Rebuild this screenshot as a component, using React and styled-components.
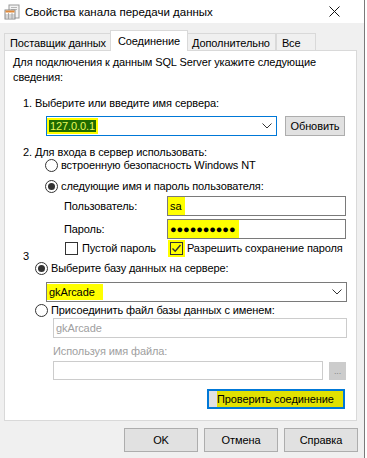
import React from "react";
import styled, { createGlobalStyle } from "styled-components";

const Global = createGlobalStyle`
  html, body { margin: 0; padding: 0; background: #fff; }
  body {
    font-family: "Liberation Sans", Arial, sans-serif;
    font-size: 11px;
    letter-spacing: -0.1px;
    color: #000;
    white-space: nowrap;
  }
`;

// окно диалога
const Window = styled.div`
  width: 364px;
  height: 458px;
  background: #f0f0f0;
  border-right: 1px solid #7a7a7a;
  display: flex;
  flex-direction: column;
`;
const TitleBar = styled.div`
  height: 23px;
  background: #fff;
  display: flex;
  align-items: center;
  padding-left: 4px;
  gap: 5px;
  font-size: 11.5px;
  letter-spacing: 0;
`;
const TitleText = styled.div`
  flex: 1;
`;
const Close = styled.div`
  width: 44px;
  display: flex;
  justify-content: center;
  padding-right: 8px;
`;

// вкладки
const Tabs = styled.div`
  display: flex;
  align-items: flex-end;
  padding-left: 4px;
  margin-top: 8px;
  height: 20px;
  position: relative;
  z-index: 1;
`;
const Tab = styled.div`
  height: ${p => (p.$active ? 21 : 18)}px;
  min-width: ${p => p.$min || 0}px;
  box-sizing: border-box;
  padding: 0 ${p => (p.$active ? 7 : 5)}px;
  margin: 0 ${p => (p.$active ? -2 : 0)}px;
  background: ${p => (p.$active ? "#fff" : "#f0f0f0")};
  border: 1px solid #d9d9d9;
  border-bottom: ${p => (p.$active ? "none" : "1px solid #d9d9d9")};
  display: flex;
  align-items: center;
  position: relative;
  z-index: ${p => (p.$active ? 2 : 0)};
  padding-top: ${p => (p.$active ? 0 : 1)}px;
`;
const Panel = styled.div`
  margin: -1px 7px 0 4px;
  height: 371px;
  box-sizing: border-box;
  background: #fff;
  border: 1px solid #d9d9d9;
  padding: 4px 0 0 8px;
  display: flex;
  flex-direction: column;
`;
const Line = styled.div`
  line-height: 15px;
  padding-left: ${p => p.$indent || 0}px;
  margin-top: ${p => p.$top || 0}px;
  color: ${p => (p.$disabled ? "#a0a0a0" : "#000")};
  height: ${p => p.$h || "auto"};
`;
const Row = styled.div`
  display: flex;
  align-items: center;
  padding-left: ${p => p.$indent || 0}px;
  margin-top: ${p => p.$top || 0}px;
  height: ${p => p.$h || 20}px;
`;
const Combo = styled.div`
  width: ${p => p.$w}px;
  height: 20px;
  box-sizing: border-box;
  border: 1px solid ${p => (p.$focus ? "#0078d7" : "#7a7a7a")};
  background: #fff;
  display: flex;
  align-items: center;
  padding-left: 2px;
`;
const ComboValue = styled.div`
  flex: 1;
  display: flex;
`;
const Arrow = styled.div`
  width: 18px;
  display: flex;
  justify-content: center;
`;
const Field = styled.div`
  width: ${p => p.$w}px;
  height: ${p => p.$h || 20}px;
  box-sizing: border-box;
  border: 1px solid ${p => (p.$disabled ? "#cccccc" : "#7a7a7a")};
  background: #fff;
  display: flex;
  align-items: center;
  padding-left: 2px;
  color: ${p => (p.$disabled ? "#a0a0a0" : "#000")};
`;
const Label = styled.div`
  width: ${p => p.$w}px;
`;
const Button = styled.div`
  width: ${p => p.$w}px;
  height: ${p => p.$h || 20}px;
  box-sizing: border-box;
  border: 1px solid ${p => (p.$disabled ? "#cccccc" : "#adadad")};
  background: ${p => (p.$disabled ? "#cccccc" : "#e1e1e1")};
  display: flex;
  align-items: center;
  justify-content: center;
  color: ${p => (p.$disabled ? "#8a8a8a" : "#000")};
  font-size: ${p => p.$fs || 11}px;
  margin-left: ${p => p.$ml || 0}px;
`;
const TestButton = styled.div`
  width: 138px;
  height: 20px;
  box-sizing: border-box;
  border: 2px solid #0078d7;
  background: linear-gradient(to right, #e1e1e1 0 8px, #e1e100 8px);
  display: flex;
  align-items: center;
  padding-left: 8px;
  margin-left: 194px;
  margin-top: 9px;
`;
const Marker = styled.span`
  background: #ffff00;
  padding: ${p => p.$pad || "1px 2px"};
  margin-left: -2px;
`;
const Selected = styled.span`
  background: #1f6b00;
  color: #e8f85a;
  padding: 0 1px;
  outline: 2px solid #ffff00;
`;
const Radio = styled.span`
  width: 13px;
  height: 13px;
  box-sizing: border-box;
  border: 1px solid #333;
  border-radius: 50%;
  background: #fff;
  display: inline-flex;
  align-items: center;
  justify-content: center;
  margin-right: 3px;
  flex: none;
  &::after {
    content: "";
    width: 7px;
    height: 7px;
    border-radius: 50%;
    background: ${p => (p.$on ? "#333" : "transparent")};
  }
`;
const Check = styled.span`
  width: 13px;
  height: 13px;
  box-sizing: border-box;
  border: 1px solid #333;
  background: ${p => (p.$mark ? "#ffff00" : "#fff")};
  display: inline-flex;
  align-items: center;
  justify-content: center;
  margin-right: 4px;
  flex: none;
  outline: ${p => (p.$mark ? "2px solid #ffff00" : "none")};
`;
const Footer = styled.div`
  display: flex;
  justify-content: flex-end;
  gap: 6px;
  padding: 7px 6px 0 0;
`;
const FooterButton = styled.div`
  width: 74px;
  height: 24px;
  box-sizing: border-box;
  border: 1px solid #adadad;
  background: #e1e1e1;
  display: flex;
  align-items: center;
  justify-content: center;
`;

const ChevronDown = () => (
  <svg width="10" height="6" viewBox="0 0 10 6">
    <path d="M0.5 0.5 L5 5 L9.5 0.5" fill="none" stroke="#333" strokeWidth="1" />
  </svg>
);

const CheckMark = () => (
  <svg width="11" height="11" viewBox="0 0 11 11">
    <path d="M1.5 5.5 L4.2 8.2 L9.5 2" fill="none" stroke="#333" strokeWidth="1.4" />
  </svg>
);

const AppIcon = () => (
  <svg width="16" height="16" viewBox="0 0 16 16">
    <rect x="5" y="1" width="10" height="13" fill="#f4f4f4" stroke="#9a9a9a" />
    <rect x="7" y="3" width="6" height="1" fill="#b8b8b8" />
    <rect x="7" y="5" width="6" height="1" fill="#b8b8b8" />
    <rect x="1" y="6" width="10" height="9" fill="#fff" stroke="#8a8a8a" />
    <rect x="1.5" y="6.5" width="9" height="2" fill="#e08a3a" />
    <path d="M1 11 H11 M1 13 H11 M4.5 9 V15 M8 9 V15" stroke="#9a9a9a" strokeWidth="0.8" />
  </svg>
);

const CloseIcon = () => (
  <svg width="11" height="11" viewBox="0 0 11 11">
    <path d="M0.5 0.5 L10.5 10.5 M10.5 0.5 L0.5 10.5" stroke="#111" strokeWidth="1" />
  </svg>
);

export default function App() {
  return (
    <>
      <Global />
      <Window>
        <TitleBar>
          <AppIcon />
          <TitleText>Свойства канала передачи данных</TitleText>
          <Close><CloseIcon /></Close>
        </TitleBar>

        <Tabs>
          <Tab>Поставщик данных</Tab>
          <Tab $active>Соединение</Tab>
          <Tab>Дополнительно</Tab>
          <Tab $min={40}>Все</Tab>
        </Tabs>

        <Panel>
          <Line>Для подключения к данным SQL Server укажите следующие<br />сведения:</Line>

          <Line $indent={10} $top={11}>1. Выберите или введите имя сервера:</Line>
          <Row $indent={33} $top={5}>
            <Combo $w={231} $focus>
              <ComboValue><Selected>127.0.0.1</Selected></ComboValue>
              <Arrow><ChevronDown /></Arrow>
            </Combo>
            <Button $w={60} $ml={8}>Обновить</Button>
          </Row>

          <Line $indent={10} $top={9}>2. Для входа в сервер использовать:</Line>
          <Row $indent={32} $top={-1} $h={12}>
            <Radio />встроенную безопасность Windows NT
          </Row>
          <Row $indent={32} $top={9} $h={12}>
            <Radio $on />следующие имя и пароль пользователя:
          </Row>
          <Row $indent={51} $top={4}>
            <Label $w={103}>Пользователь:</Label>
            <Field $w={179}><Marker $pad="3px 4px 3px 2px">sa</Marker></Field>
          </Row>
          <Row $indent={51} $top={3}>
            <Label $w={103}>Пароль:</Label>
            <Field $w={179}><Marker $pad="3px 4px 3px 2px">●●●●●●●●●●</Marker></Field>
          </Row>
          <Row $indent={52} $top={1} $h={16}>
            <Check />
            <Label $w={88}>Пустой пароль</Label>
            <Check $mark><CheckMark /></Check>
            Разрешить сохранение пароля
          </Row>

          <Line $indent={10} $top={-7} $h="10px">3</Line>
          <Row $indent={22} $top={3} $h={12}>
            <Radio $on />Выберите базу данных на сервере:
          </Row>
          <Row $indent={33} $top={8}>
            <Combo $w={301}>
              <ComboValue><Marker $pad="2px 8px 2px 2px">gkArcade</Marker></ComboValue>
              <Arrow><ChevronDown /></Arrow>
            </Combo>
          </Row>
          <Row $indent={22} $top={2} $h={12}>
            <Radio />Присоединить файл базы данных с именем:
          </Row>
          <Row $indent={40} $top={2}>
            <Field $w={294} $disabled>gkArcade</Field>
          </Row>
          <Line $indent={40} $top={6} $disabled>Используя имя файла:</Line>
          <Row $indent={40} $top={2} $h={19}>
            <Field $w={270} $h={19} $disabled />
            <Button $w={17} $h={18} $ml={6} $disabled $fs={9}>...</Button>
          </Row>

          <TestButton>Проверить соединение</TestButton>
        </Panel>

        <Footer>
          <FooterButton>OK</FooterButton>
          <FooterButton>Отмена</FooterButton>
          <FooterButton>Справка</FooterButton>
        </Footer>
      </Window>
    </>
  );
}
